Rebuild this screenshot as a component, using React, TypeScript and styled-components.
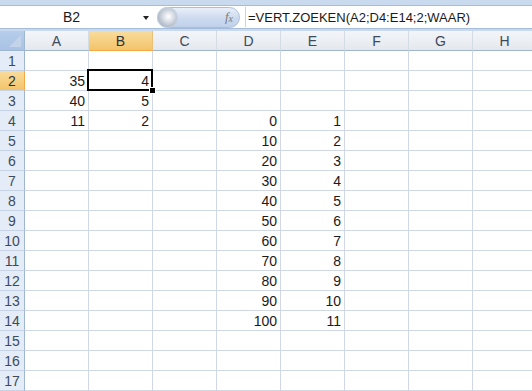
import React from 'react';
import styled, { createGlobalStyle, css } from 'styled-components';

const GlobalStyle = createGlobalStyle`
    html, body {
        margin: 0;
        padding: 0;
        background: #ffffff;
        overflow: hidden;
    }
    body {
        font-family: "Liberation Sans", Arial, sans-serif;
    }
`;

const COLS = ['A', 'B', 'C', 'D', 'E', 'F', 'G', 'H'];
const ROW_COUNT = 17;

// cell values keyed by "col+row"
const values: Record<string, string> = {
    A2: '35', B2: '4',
    A3: '40', B3: '5',
    A4: '11', B4: '2',
};
for (let i = 0; i <= 10; i++) {
    values['D' + (4 + i)] = String(i * 10);
    values['E' + (4 + i)] = String(i + 1);
}

const SELECTED_COL = 'B';
const SELECTED_ROW = 2;

const Window = styled.div`
    width: 532px;
    height: 391px;
    overflow: hidden;
    display: flex;
    flex-direction: column;
    background: #ffffff;
`;

const TopStrip = styled.div`
    height: 5px;
    background: #c9d9ee;
    border-bottom: 1px solid #a7bcd8;
    flex-shrink: 0;
`;

const FormulaBar = styled.div`
    height: 22px;
    display: flex;
    align-items: center;
    background: #ffffff;
    flex-shrink: 0;
`;

const NameBox = styled.div`
    width: 155px;
    height: 100%;
    display: flex;
    align-items: center;
    font-size: 14px;
    color: #1a1a1a;
    .name{
        flex: 1;
        text-align: center;
        padding-left: 0;
    }
    .arrow{
        width: 0;
        height: 0;
        border-left: 3px solid transparent;
        border-right: 3px solid transparent;
        border-top: 4px solid #222;
        margin-right: 6px;
        margin-top: 1px;
    }
`;

const FxPill = styled.div`
    margin-left: 2px;
    width: 83px;
    height: 21px;
    border-radius: 11px;
    background: linear-gradient(#e9f0f9, #cbdaee 55%, #bfd1ea);
    border: 1px solid #a9bedb;
    box-sizing: border-box;
    display: flex;
    align-items: center;
    justify-content: space-between;
    padding: 0 4px 0 0;
`;

const RoundKnob = styled.div`
    width: 19px;
    height: 19px;
    border-radius: 50%;
    background: radial-gradient(circle at 55% 45%, #ffffff 0, #dfe3ea 30%, #aeb8c5 72%, #8e9aab 100%);
    box-shadow: 0 0 0 1px #c4cfdd;
`;

const FxLabel = styled.span`
    font-family: "Liberation Serif", "Times New Roman", serif;
    font-style: italic;
    font-size: 13px;
    color: #7c7c7c;
    margin-right: 2px;
    sub{
        font-size: 10px;
        vertical-align: -1px;
    }
`;

const Separator = styled.div`
    width: 1px;
    height: 20px;
    background: #c8d3e2;
    margin-left: 5px;
`;

const FormulaText = styled.div`
    padding-left: 2px;
    font-size: 13px;
    color: #1a1a1a;
    white-space: nowrap;
`;

const BarGap = styled.div`
    height: 2px;
    background: #c9d9ee;
    border-top: 1px solid #a7bcd8;
    flex-shrink: 0;
`;

const Sheet = styled.div`
    display: grid;
    grid-template-columns: 25px repeat(${COLS.length}, 64px);
    grid-auto-rows: 20px;
    font-size: 14px;
`;

const Corner = styled.div`
    background: linear-gradient(#b6cdea, #a9c3e6);
    border-right: 1px solid #9eb6ce;
    border-bottom: 1px solid #9eb6ce;
    box-sizing: border-box;
    position: relative;
    &::after{
        content: '';
        position: absolute;
        right: 3px;
        bottom: 3px;
        width: 0;
        height: 0;
        border-left: 12px solid transparent;
        border-bottom: 12px solid #c3d4ea;
    }
`;

const ColHeader = styled.div<{ $active?: boolean }>`
    box-sizing: border-box;
    border-right: 1px solid #d5dbe3;
    border-bottom: 1px solid #9eb6ce;
    background: linear-gradient(#f3f5f8, #e4e8ee);
    color: #3d4a5c;
    display: flex;
    align-items: center;
    justify-content: center;
    ${p => p.$active && css`
        background: linear-gradient(#f9dc9c, #f3c46a);
        border-bottom: 1px solid #f2a844;
        border-right: 1px solid #e9c07a;
        color: #2b3340;
    `}
`;

const RowHeader = styled.div<{ $active?: boolean }>`
    box-sizing: border-box;
    border-right: 1px solid #9eb6ce;
    border-bottom: 1px solid #c5d3e4;
    background: #e4ecf7;
    color: #3d4a5c;
    display: flex;
    align-items: center;
    justify-content: center;
    ${p => p.$active && css`
        background: linear-gradient(#f9dc9c, #f3c46a);
        border-right: 1px solid #f2a844;
        color: #2b3340;
    `}
`;

const Cell = styled.div<{ $selected?: boolean }>`
    box-sizing: border-box;
    border-right: 1px solid #d0d7e5;
    border-bottom: 1px solid #d0d7e5;
    display: flex;
    align-items: flex-end;
    justify-content: flex-end;
    padding: 0 3px 1px 0;
    color: #1a1a1a;
    position: relative;
    ${p => p.$selected && css`
        z-index: 2;
        &::before{
            content: '';
            position: absolute;
            left: -2px;
            top: -2px;
            right: -1px;
            bottom: -1px;
            border: 2px solid #000;
            pointer-events: none;
        }
        &::after{
            content: '';
            position: absolute;
            right: -4px;
            bottom: -4px;
            width: 5px;
            height: 5px;
            background: #000;
            border: 1px solid #fff;
        }
    `}
`;

const App = () => {
    const rows = Array.from({ length: ROW_COUNT }, (_, i) => i + 1);
    return (
        <>
            <GlobalStyle />
            <Window>
                <TopStrip />
                <FormulaBar>
                    <NameBox>
                        <span className="name">B2</span>
                        <span className="arrow" />
                    </NameBox>
                    <FxPill>
                        <RoundKnob />
                        <FxLabel>f<sub>x</sub></FxLabel>
                    </FxPill>
                    <Separator />
                    <FormulaText>=VERT.ZOEKEN(A2;D4:E14;2;WAAR)</FormulaText>
                </FormulaBar>
                <BarGap />
                <Sheet>
                    <Corner />
                    {COLS.map(c => (
                        <ColHeader key={c} $active={c === SELECTED_COL}>{c}</ColHeader>
                    ))}
                    {rows.map(r => (
                        <React.Fragment key={r}>
                            <RowHeader $active={r === SELECTED_ROW}>{r}</RowHeader>
                            {COLS.map(c => (
                                <Cell key={c + r} $selected={c === SELECTED_COL && r === SELECTED_ROW}>
                                    {values[c + r]}
                                </Cell>
                            ))}
                        </React.Fragment>
                    ))}
                </Sheet>
            </Window>
        </>
    );
};

export default App;
